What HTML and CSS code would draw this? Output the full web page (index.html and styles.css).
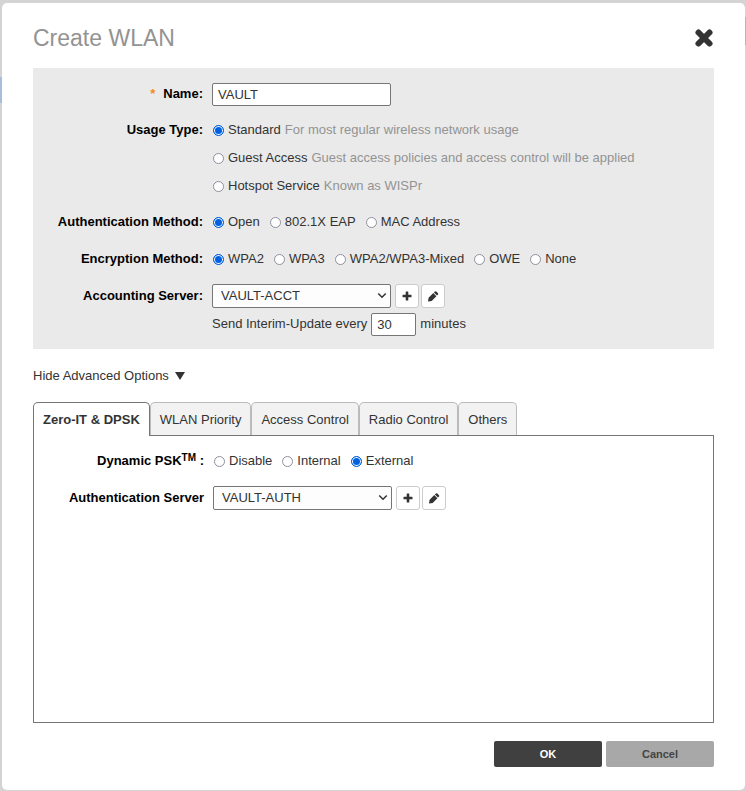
FILE: index.html
```html
<!DOCTYPE html>
<html lang="en">
<head>
<meta charset="utf-8">
<title>Create WLAN</title>
<link rel="stylesheet" href="styles.css">
</head>
<body>
<svg class="sprite" aria-hidden="true">
  <symbol id="plus" viewBox="0 0 12 12"><path d="M4.700 2q0-.5.5-.5h1.600q.5 0 .5.5v2.700H10q.5 0 .5.5v1.600q0 .5-.5.5H7.300V10q0 .5-.5.500H5.200q-.5 0-.5-.5V7.300H2q-.5 0-.5-.5V5.200q0-.5.5-.5h2.700z"/></symbol>
  <symbol id="pencil" viewBox="0 0 12 12"><path d="M1 11.500l.6-3.700L6.300 3.100l3.100 3.100-4.700 4.700zM6.900 2.500l1-1q.7-.6 1.400 0l1.700 1.700q.6.700 0 1.400l-1 1z"/></symbol>
</svg>
<main class="dialog" role="dialog" aria-labelledby="title">
  <header class="dialog-head">
    <h1 id="title">Create WLAN</h1>
    <button class="close" type="button" aria-label="Close"><svg viewBox="0 0 20 20"><path d="M4.500 4.500l11 11m0-11l-11 11"/></svg></button>
  </header>
  <form>
    <section class="panel">
      <div class="row">
        <label class="caption" for="name"><span class="required">*</span>Name:</label>
        <div class="controls"><input class="text name" id="name" type="text" value="VAULT"></div>
      </div>
      <div class="row" role="radiogroup" aria-labelledby="usage">
        <span class="caption" id="usage">Usage Type:</span>
        <div class="stack">
          <label class="choice"><input type="radio" name="usage" checked>Standard <span class="hint">For most regular wireless network usage</span></label>
          <label class="choice"><input type="radio" name="usage">Guest Access <span class="hint">Guest access policies and access control will be applied</span></label>
          <label class="choice"><input type="radio" name="usage">Hotspot Service <span class="hint">Known as WISPr</span></label>
        </div>
      </div>
      <div class="row" role="radiogroup" aria-labelledby="auth">
        <span class="caption" id="auth">Authentication Method:</span>
        <div class="controls choices">
          <label class="choice"><input type="radio" name="auth" checked>Open</label>
          <label class="choice"><input type="radio" name="auth">802.1X EAP</label>
          <label class="choice"><input type="radio" name="auth">MAC Address</label>
        </div>
      </div>
      <div class="row roomy" role="radiogroup" aria-labelledby="enc">
        <span class="caption" id="enc">Encryption Method:</span>
        <div class="controls choices">
          <label class="choice"><input type="radio" name="enc" checked>WPA2</label>
          <label class="choice"><input type="radio" name="enc">WPA3</label>
          <label class="choice"><input type="radio" name="enc">WPA2/WPA3-Mixed</label>
          <label class="choice"><input type="radio" name="enc">OWE</label>
          <label class="choice"><input type="radio" name="enc">None</label>
        </div>
      </div>
      <div class="row">
        <label class="caption" for="acct">Accounting Server:</label>
        <div class="stack">
          <div class="controls">
            <span class="select"><select id="acct"><option>VAULT-ACCT</option></select><svg viewBox="0 0 8 6"><path d="M1 1l3 3 3-3"/></svg></span>
            <button class="tool" type="button" aria-label="Add accounting server"><svg><use href="#plus"/></svg></button>
            <button class="tool" type="button" aria-label="Edit accounting server"><svg><use href="#pencil"/></svg></button>
          </div>
          <div class="controls">
            <label for="interval">Send Interim-Update every</label>
            <input class="text interval" id="interval" type="text" value="30">
            <span>minutes</span>
          </div>
        </div>
      </div>
    </section>
    <button class="advanced" type="button" aria-expanded="true">Hide Advanced Options<svg viewBox="0 0 10 8"><path d="M0 0h10L5 8z"/></svg></button>
    <div class="tabs" role="tablist">
      <button class="tab active" type="button" role="tab" aria-selected="true">Zero-IT &amp; DPSK</button>
      <button class="tab" type="button" role="tab">WLAN Priority</button>
      <button class="tab" type="button" role="tab">Access Control</button>
      <button class="tab" type="button" role="tab">Radio Control</button>
      <button class="tab" type="button" role="tab">Others</button>
    </div>
    <section class="pane" role="tabpanel">
      <div class="row" role="radiogroup" aria-labelledby="psk">
        <span class="caption" id="psk">Dynamic PSK<sup>TM</sup> :</span>
        <div class="controls choices">
          <label class="choice"><input type="radio" name="psk">Disable</label>
          <label class="choice"><input type="radio" name="psk">Internal</label>
          <label class="choice"><input type="radio" name="psk" checked>External</label>
        </div>
      </div>
      <div class="row">
        <label class="caption" for="server">Authentication Server</label>
        <div class="controls">
          <span class="select"><select id="server"><option>VAULT-AUTH</option></select><svg viewBox="0 0 8 6"><path d="M1 1l3 3 3-3"/></svg></span>
          <button class="tool" type="button" aria-label="Add authentication server"><svg><use href="#plus"/></svg></button>
          <button class="tool" type="button" aria-label="Edit authentication server"><svg><use href="#pencil"/></svg></button>
        </div>
      </div>
    </section>
    <footer class="actions">
      <button class="action primary" type="button">OK</button>
      <button class="action" type="button">Cancel</button>
    </footer>
  </form>
</main>
</body>
</html>
```
FILE: styles.css
```css
* { box-sizing: border-box; }

body {
  margin: 0;
  padding: 3px 1px 1px 2px;
  min-height: 100vh;
  display: flex;
  flex-direction: column;
  background:
    linear-gradient(#a5bfdc, #a5bfdc) 0 77px / 2px 26px no-repeat,
    linear-gradient(#a9b8c2, #a9b8c2) 100% 17px / 1px 28px no-repeat,
    #d4d4d4;
  color: #333;
  font: 13px/28px "Liberation Sans", Arial, sans-serif;
}

button, input, select { font: inherit; color: inherit; margin: 0; }
button { padding: 0; }
svg { display: block; fill: currentColor; }
.sprite { position: absolute; width: 0; height: 0; }

.dialog {
  flex: 1;
  display: flex;
  flex-direction: column;
  padding: 21px 31px 23px;
  background: #fff;
  border-radius: 5px;
}

.dialog-head {
  display: flex;
  justify-content: space-between;
  align-items: center;
  height: 28px;
  margin-bottom: 16px;
}

h1 { margin: 0; font-size: 23px; font-weight: 400; color: #939393; }

.close { width: 20px; height: 20px; border: 0; background: none; }
.close svg {
  width: 20px;
  height: 20px;
  fill: none;
  stroke: #333;
  stroke-width: 6;
  stroke-linecap: round;
}

form { flex: 1; display: flex; flex-direction: column; }

.panel {
  display: flex;
  flex-direction: column;
  gap: 8px;
  padding: 12px 0 11px;
  background: #eaeaea;
}

.row { display: grid; grid-template-columns: 170px 1fr; column-gap: 9px; }
.roomy { line-height: 30px; }
.caption { text-align: right; font-weight: 700; color: #000; }
.required { margin-right: 8px; color: #f08a24; }
.controls { display: flex; align-items: center; gap: 4px; min-height: 28px; }
.choices { gap: 9px; }
.choice { display: flex; align-items: center; gap: 4px; white-space: nowrap; }
.hint { color: #939393; }

input[type="radio"] {
  appearance: none;
  width: 11px;
  height: 11px;
  margin-left: 1px;
  border: 1px solid #8f8f9d;
  border-radius: 50%;
  background: #fff;
}
input[type="radio"]:checked {
  border: 1px solid #0060df;
  background: #0060df;
  box-shadow: inset 0 0 0 1px #fff;
}

.text {
  height: 23px;
  padding: 0 5px;
  border: 1px solid #767676;
  border-radius: 2px;
  background: #fff;
  line-height: 21px;
}
.name { width: 179px; }
.interval { width: 45px; }

.select { display: grid; width: 179px; align-items: center; }
.select > * { grid-area: 1 / 1; }
.select select {
  appearance: none;
  height: 24px;
  padding: 0 20px 0 8px;
  border: 1px solid #767676;
  border-radius: 2px;
  background: #fdfdfd;
  line-height: 20px;
}
.select svg {
  justify-self: end;
  width: 10px;
  height: 8px;
  margin-right: 4px;
  fill: none;
  stroke: #333;
  stroke-width: 1.200;
  pointer-events: none;
}

.tool {
  display: grid;
  place-items: center;
  width: 24px;
  height: 24px;
  border: 1px solid #ccc;
  border-radius: 3px;
  background: #fff;
}
.tool + .tool { margin-left: -2px; }
.tool svg { width: 12px; height: 12px; }

.advanced {
  display: flex;
  align-items: center;
  align-self: flex-start;
  gap: 6px;
  margin: 13px 0 12px;
  border: 0;
  background: none;
}
.advanced svg { width: 10px; height: 8px; }

.tabs { display: flex; }
.tab {
  height: 33px;
  padding: 2px 9px 0;
  border: 1px solid #bbb;
  border-bottom: 0;
  border-radius: 5px 5px 0 0;
  background: #f2f2f2;
}
.tab.active {
  height: 34px;
  margin-bottom: -1px;
  padding-top: 0;
  border-color: #767676;
  background: #fff;
  font-weight: 700;
  position: relative;
}

.pane {
  flex: 1;
  display: flex;
  flex-direction: column;
  gap: 9px;
  padding: 11px 0;
  border: 1px solid #767676;
}
sup { font-size: 10px; line-height: 1; vertical-align: 4px; }

.actions { display: flex; justify-content: flex-end; gap: 4px; margin-top: 18px; }
.action {
  width: 108px;
  height: 26px;
  border: 0;
  border-radius: 2px;
  background: #a8a8a8;
  color: #444;
  font-size: 11px;
  line-height: 24px;
  font-weight: 700;
}
.primary { background: #404040; color: #fff; }
```
